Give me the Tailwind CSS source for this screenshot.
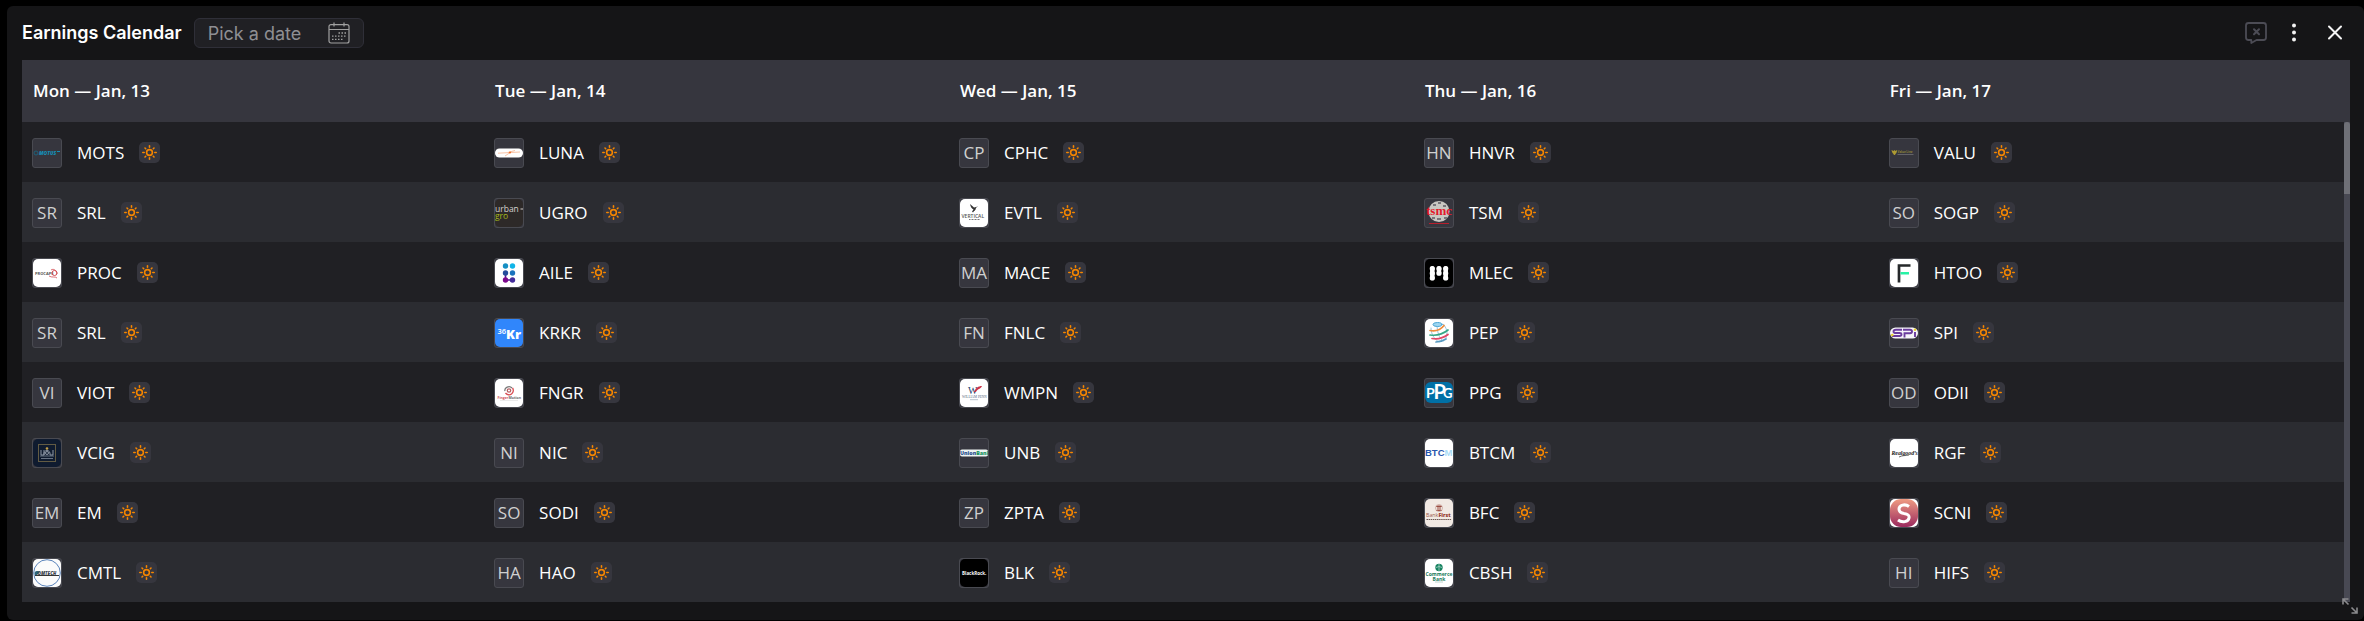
<!DOCTYPE html>
<html lang="en">
<head>
<meta charset="utf-8">
<meta name="viewport" content="width=device-width, initial-scale=1">
<title>Earnings Calendar</title>
<script src="https://cdn.jsdelivr.net/npm/@tailwindcss/browser@4"></script>
</head>
<body class="min-h-screen bg-black pt-1.5 pl-[7px] font-['Inter',sans-serif]">
<section class="relative rounded-md bg-[#151517] pr-3.5 pb-[18px] pl-[15px]">
  <header class="flex h-[54px] items-center">
    <h1 class="text-[18px] leading-6 font-semibold text-white">Earnings Calendar</h1>
    <button type="button" class="ml-3 flex h-[30px] items-center gap-[27px] rounded-md border border-[#2f2f38] bg-[#202024] px-[13px] text-[18px] text-[#8f8f93]">
      <span>Pick a date</span>
      <svg class="size-[22px]" viewBox="0 0 22 22" fill="none" stroke="#a0a0a0" stroke-width="1.2" aria-hidden="true">
        <rect x="1" y="2.6" width="20" height="18.4" rx="2"/><path d="M1 7.5h20M6 .4v4M16 .4v4"/>
        <path d="M10.5 11h8M4 14.2h14.500M4 17.400h11.500" stroke-width="1.300" stroke-dasharray="1.500 1.500"/>
      </svg>
    </button>
    <nav class="ml-auto flex items-center gap-4" aria-label="Widget controls">
      <button type="button" aria-label="Dismiss comments" class="flex w-6 justify-center">
        <svg class="size-6" viewBox="0 0 24 24" fill="none" stroke="#4c4c55" stroke-width="1.800" stroke-linejoin="round" stroke-linecap="round"><path d="M4.500 2h15a2.500 2.500 0 0 1 2.500 2.500v12a2.500 2.500 0 0 1-2.500 2.500H12.500L7.300 22v-3H4.500A2.500 2.500 0 0 1 2 16.500v-12A2.500 2.500 0 0 1 4.500 2Z"/><path d="m10 8.300 5 5m0-5-5 5" stroke-width="2"/></svg>
      </button>
      <button type="button" aria-label="More options" class="flex w-5 justify-center">
        <svg class="h-5 w-1" viewBox="0 0 4 20" fill="#f2f2f2"><circle cx="2" cy="2.500" r="2"/><circle cx="2" cy="9.500" r="2"/><circle cx="2" cy="16.500" r="2"/></svg>
      </button>
      <button type="button" aria-label="Close" class="flex w-[30px] justify-center">
        <svg class="size-4" viewBox="0 0 16 16" stroke="#f4f4f4" stroke-width="2" stroke-linecap="round"><path d="m2 1.500 12 12m0-12-12 12"/></svg>
      </button>
    </nav>
  </header>

  <div class="relative">
    <table class="w-full table-fixed border-collapse text-left font-['Open_Sans',sans-serif] text-[17px] leading-6 text-white">
      <colgroup><col class="w-[19.85%]"><col class="w-[19.97%]"><col class="w-[19.97%]"><col class="w-[19.97%]"><col></colgroup>
      <thead class="bg-[#36363e]"><tr id="days" class="h-[62px]"></tr></thead>
      <tbody id="rows"></tbody>
    </table>
    <div class="absolute top-[62px] right-0 bottom-0 w-1.5 bg-[#484953]" aria-hidden="true"><div class="h-[15%] rounded-t-full bg-[#6f7077]"></div></div>
  </div>
  <svg class="absolute right-1.5 bottom-1.5 size-4" viewBox="0 0 16 16" fill="none" stroke="#8b8b8e" stroke-width="1.600" aria-hidden="true"><path d="M1 6.500V1h5.500M1 1l5.500 5.500M15 9.500V15H9.500M15 15 9.500 9.500"/></svg>
</section>

<script>
const tile = c => `<rect width="28" height="28" rx="5" fill="${c}"/>`;
const logos = {
  MOTS: `<g fill="#168db5"><circle cx="3" cy="14" r="2" fill="none" stroke="#176a86" stroke-width=".8"/><text x="6" y="16" font-size="5" font-weight="800" font-style="italic">MOTUS</text><path d="M24 12h3v1h-3z"/></g>`,
  PROC: tile('#fff') + `<text x="2" y="15.600" font-size="4" font-weight="700" fill="#555">PROCAPS</text><g fill="none" stroke="#d34b50"><circle cx="21.500" cy="14" r="2.500"/><path d="M18 11c3-2 6 1 6 4m-8 2c3 2 6 0 8 2" stroke-width=".8"/></g>`,
  VCIG: tile('#0f1b2f') + `<rect x="5.500" y="5.500" width="17" height="17" fill="none" stroke="#625b43"/><g fill="none" stroke="#8e98a6"><path d="M8 11v5h3v-5m6 5h3v-5M11 16c-1-6 7-6 6 0"/><circle cx="14" cy="14" r="1.500"/><path d="M7 17h14M8 19.500h12" stroke-width=".7"/></g><circle cx="14" cy="9.500" r="1.300" fill="#c5a14b"/>`,
  CMTL: tile('#fbfbfb') + `<circle cx="14" cy="14" r="13.300" fill="none" stroke="#5a83ba" stroke-width="1"/><path d="M2 16c-2-4 3-5 5-3l-3 3Z" fill="#2b6379"/><text x="4.500" y="15.600" font-size="4.600" font-weight="800" font-style="italic" fill="#3b4650">OMTECH</text><path d="M2 16.500h24" stroke="#333"/>`,
  LUNA: `<rect y="9.500" width="28" height="9" rx="4.500" fill="#fff"/><path d="M3 14.200 25 13M13 13.500l7-2M10 17l6-4" stroke="#f6b48f" stroke-width=".8"/><circle cx="15" cy="13.500" r="1" fill="#f06b24"/>`,
  UGRO: tile('#2d2928') + `<text x="0" y="12.500" font-size="8.500" fill="#d5d2cf">urban</text><path d="M25.500 10H28" stroke="#d5d2cf"/><text x="0" y="19.500" font-size="8.500" fill="#a5b91b">gro</text>`,
  AILE: tile('#fff') + `<path d="M10.500 14v7h7" fill="none" stroke="#571895" stroke-width="1.600"/><circle cx="10.500" cy="7" r="2.700" fill="#168fc3"/><circle cx="17.500" cy="7" r="2.700" fill="#10b4e8"/><circle cx="10.500" cy="14" r="2.700" fill="#254c9b"/><circle cx="17.500" cy="14" r="2.700" fill="#1b73bd"/><circle cx="10.500" cy="21" r="2.700" fill="#7c088b"/><circle cx="17.500" cy="21" r="2.700" fill="#432c9b"/>`,
  KRKR: tile('#3086fb') + `<g fill="#fff"><text x="2.500" y="14.500" font-size="7.500" font-weight="600">36</text><text x="11" y="19.500" font-size="13" font-weight="800">Kr</text></g>`,
  FNGR: tile('#fff') + `<g fill="none" stroke-width="1.300"><path d="M10 12a4 3.500 0 0 1 7-3" stroke="#777"/><path d="M17.500 9a4 4 0 1 1-7 5" stroke="#d84c52"/><circle cx="14" cy="11.500" r="1.700" stroke="#b76266"/></g><text x="2.500" y="19.800" font-size="3.500" font-weight="700" fill="#d24e54">Finger<tspan fill="#666">Motion</tspan></text><path d="M5 21.500h18" stroke="#ddd" stroke-width=".6"/>`,
  EVTL: tile('#fff') + `<path d="m10 5 4 3.500c2 0 2-1 4-1l-2 1.300c0 2.500-2 3-3 4.700l-1-1 1.500-2C12 10 10.500 8 10 5Z" fill="#333"/><text x="1.500" y="18.500" font-size="5" font-weight="600" fill="#555">VERTICAL</text><path d="M9 20.500h11" stroke="#777" stroke-dasharray="1 .5"/>`,
  WMPN: tile('#fff') + `<text x="8" y="14.500" font-size="10" font-family="Liberation Serif" fill="#24446d">W</text><path d="M14 13c2-4 4-6 8-6-1 3-5 3-6 6Z" fill="#cd3147"/><text x="2" y="19" font-size="3.400" font-family="Liberation Serif" fill="#53677e">WILLIAM PENN</text><path d="M10 20.700h8" stroke="#9ba8b5" stroke-width=".7"/>`,
  UNB: `<rect y="10.500" width="28" height="7" rx="2" fill="#eef3f2"/><text x="0" y="16" font-size="5.300" font-weight="800" fill="#254e8c">Union<tspan fill="#18925f">Bank</tspan></text>`,
  BLK: tile('#000') + `<text x="2" y="15.700" font-size="4.500" font-weight="700" fill="#fff">BlackRock.</text>`,
  TSM: `<circle cx="14" cy="12.500" r="10.500" fill="#c9c7c2"/><path d="M8 5h3v2H8zm5-2h3v2h-3zm5 3h3v2h-3zM7 18h3v2H7zm5 1h4v2h-4zm7-1h3v2h-3z" fill="#77757a"/><text x="1" y="15.500" font-size="13" font-weight="700" font-family="Liberation Serif" fill="#e4192b">tsmc</text><path d="M4 24.500h20" stroke="#b71f2d"/>`,
  MLEC: tile('#000') + `<path d="M7.300 9.500v10m6.700-10v5m6.700-5v10" stroke="#fff" stroke-width="5.200" stroke-linecap="round" stroke-dasharray="0 4.750" fill="none"/><path d="M7.300 9.500v9.500m6.700-9.500v4.500m6.700-4.500v9.500" stroke="#fff" stroke-width="4.500" stroke-linecap="round"/>`,
  PEP: tile('#fff') + `<g fill="none" stroke-linecap="round"><path d="M6 9c0 6 3 11 8 14M12 5c0 8 2 14 6 17M18 5c4 4 5 9 3 14" stroke="#9cc3dc" stroke-width="1"/><ellipse cx="12.500" cy="5.500" rx="4.500" ry="2" stroke="#49a5d4" fill="#9fd6f0"/><g stroke-width="1.700"><path d="M5 11.500c6 1 11-1 14-5" stroke="#ef8d3c"/><path d="M5 16c7 1 13-1 18-5" stroke="#36a886"/><path d="M7 19.500c6 1 12-1 16-4" stroke="#e14867"/><path d="M11 23c4 0 7-1 10-3" stroke="#579ac0"/></g></g>`,
  PPG: `<rect y="3" width="28" height="21" rx="6" fill="#0070a6"/><g fill="#fff" font-weight="700" font-family="Lato"><text x="1" y="19" font-size="14">P</text><text x="8.500" y="20" font-size="20">P</text><text x="18" y="19" font-size="13">G</text></g>`,
  BTCM: tile('#fff') + `<text x="0" y="17" font-size="9.500" font-weight="700" fill="#2857ad" font-family="Liberation Sans">BTC<tspan fill="#a9dcf6">M</tspan></text>`,
  BFC: tile('#f1e9e3') + `<path d="M11 7.500h6m-6 4h6M13 6v6m2-6v6" stroke="#9b4c42" fill="none"/><circle cx="14" cy="9" r="3.500" fill="none" stroke="#c9a59c" stroke-width=".8"/><text x="1" y="18" font-size="5.300" fill="#99584f">Bank<tspan font-weight="800" fill="#973b30">First</tspan></text><path d="M1.500 20.500h25" stroke="#6c5753" stroke-dasharray="1.500 .6"/>`,
  CBSH: tile('#fff') + `<circle cx="14" cy="8.500" r="3.700" fill="#168260"/><path d="M14 5v7m-3-3.500 3-1 3 1" stroke="#a7d6c6" stroke-width=".8" fill="none"/><g fill="#187a5b" font-weight="700" text-anchor="middle"><text x="14" y="16.700" font-size="5">Commerce</text><text x="14" y="21.500" font-size="5">Bank</text></g><path d="M10 23h8" stroke="#91bbae" stroke-width=".6"/>`,
  VALU: `<path d="m1.500 11 2 1 1-1 1 1 1.500-1c0 3-1 3-2 5h-1c-1-2-2-2-2.500-5Z" fill="#ad9a32"/><text x="7.500" y="14" font-size="2.900" font-weight="700" fill="#92853a">Value Line</text><path d="M7.500 15.500h16" stroke="#77777c" stroke-width=".7"/>`,
  HTOO: tile('#fff') + `<path d="M9 23.500V6.500h11.500" fill="none" stroke="#25282a" stroke-width="2.700"/><path d="M10.500 14.200H19" stroke="#27f2a5" stroke-width="2.600"/>`,
  SPI: `<rect y="8.500" width="28" height="11" rx="5.500" fill="#f6f4fa"/><path d="M12 10.800H6q-2.500 0-2.500 1.600T6 14h3.500q2 0 2 1.500t-2 1.500H2M14.500 18.500v-4.300h5.500q2 0 2-1.700t-2-1.700h-7M25 13v5" fill="none" stroke="#6b3c9e" stroke-width="1.900"/><circle cx="25" cy="10.700" r="1.300" fill="#e8d02b"/><circle cx="2.300" cy="16" r="1.300" fill="#e8d02b"/>`,
  RGF: tile('#fff') + `<text x="1.500" y="15.500" font-size="5.800" font-weight="700" font-style="italic" font-family="Liberation Serif" fill="#222">Realgood’s</text><path d="M9 18c4-2 6-1 10-2" stroke="#444" fill="none" stroke-width=".8"/>`,
  SCNI: `<defs><linearGradient id="scni" x2="0" y2="1"><stop stop-color="#ef9b82"/><stop offset="1" stop-color="#9b2a5e"/></linearGradient></defs>${tile('#fff')}<rect width="28" height="28" rx="11" fill="url(#scni)"/><path d="M19 7.500c-4-3-10-1.500-10 2.500 0 3 2 4 5 4.500M14 14.500c4 .5 5.500 2 5 4.500-.6 4-7 5-11 2" fill="none" stroke="#fff" stroke-width="3"/>`
};

const calendar = [
  ['Mon — Jan, 13', ['MOTS', 'SRL', 'PROC', 'SRL', 'VIOT', 'VCIG', 'EM', 'CMTL']],
  ['Tue — Jan, 14', ['LUNA', 'UGRO', 'AILE', 'KRKR', 'FNGR', 'NIC', 'SODI', 'HAO']],
  ['Wed — Jan, 15', ['CPHC', 'EVTL', 'MACE', 'FNLC', 'WMPN', 'UNB', 'ZPTA', 'BLK']],
  ['Thu — Jan, 16', ['HNVR', 'TSM', 'MLEC', 'PEP', 'PPG', 'BTCM', 'BFC', 'CBSH']],
  ['Fri — Jan, 17', ['VALU', 'SOGP', 'HTOO', 'SPI', 'ODII', 'RGF', 'SCNI', 'HIFS']]
];

const badge = s => logos[s]
  ? `<svg class="size-7" viewBox="0 0 28 28" font-family="Open Sans" aria-hidden="true">${logos[s]}</svg>`
  : s.slice(0, 2);

const sun = `<svg class="mb-px size-[21px] shrink-0 rounded-[5px] bg-[#36363e]" viewBox="0 0 21 21" fill="none" stroke="#f58600" stroke-width="1.600" stroke-linecap="round" role="img" aria-label="Before market open"><circle cx="10.500" cy="10.500" r="2.900"/><path d="M10.500 3.800v1.400m0 10.600v1.400M3.800 10.500h1.400m10.600 0h1.400M6 6l.7.7m7.600 7.600.7.700m0-9-.7.700m-7.600 7.600-.7.700"/></svg>`;

const cell = s => `<td class="px-2.5 pt-0.5 pb-0"><div class="flex items-center gap-[15px]">
  <span class="flex size-[30px] shrink-0 items-center justify-center overflow-hidden rounded-[3px] border border-[#494a51] bg-[#36363e] text-[#d0d0d0]">${badge(s)}</span>
  <span>${s}</span>${sun}</div></td>`;

document.getElementById('days').innerHTML = calendar
  .map(([day]) => `<th scope="col" class="px-[11px] font-semibold">${day}</th>`).join('');
document.getElementById('rows').innerHTML = calendar[0][1]
  .map((_, i) => `<tr class="h-[60px] odd:bg-[#202024] even:bg-[#2b2c31]">${calendar.map(([, list]) => cell(list[i])).join('')}</tr>`).join('');
</script>
</body>
</html>
